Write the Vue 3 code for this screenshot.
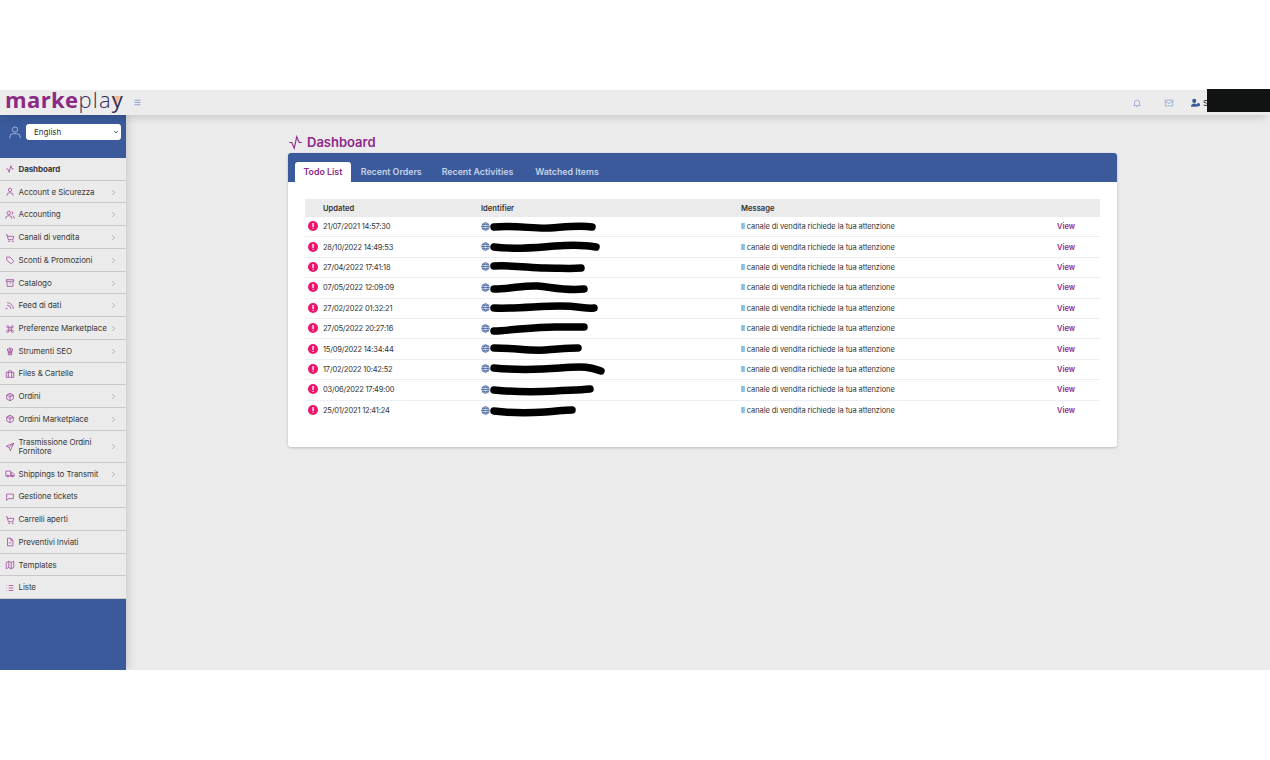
<script setup>
const icons = {
  activity: ['M3 12h4l3 8 4-16 3 8h4'],
  user: ['M12 11a4 4 0 1 0 0-8 4 4 0 0 0 0 8z', 'M5 21v-2a5 5 0 0 1 5-5h4a5 5 0 0 1 5 5v2'],
  users: ['M9 11a4 4 0 1 0 0-8 4 4 0 0 0 0 8z', 'M2 21v-2a5 5 0 0 1 5-5h4a5 5 0 0 1 5 5v2', 'M16 3.2a4 4 0 0 1 0 7.6', 'M22 21v-2a5 5 0 0 0-3.5-4.8'],
  cart: ['M2 4h3l3 12h11l2-8H6', 'M9 20a1 1 0 1 0 0-.01z', 'M18 20a1 1 0 1 0 0-.01z'],
  tag: ['M4 5h8l8 8a2 2 0 0 1 0 3l-4 4a2 2 0 0 1-3 0l-9-8z', 'M8 9h.01'],
  archive: ['M3 4h18v4H3z', 'M5 8v12h14V8', 'M10 12h4'],
  rss: ['M5 4a15 15 0 0 1 15 15', 'M5 10a9 9 0 0 1 9 9', 'M5 18a1 1 0 1 0 0 .01z'],
  command: ['M9 9h6v6H9z', 'M9 9H6.500a2.500 2.500 0 1 1 2.500-2.500z', 'M15 9V6.500A2.500 2.500 0 1 1 17.500 9z', 'M15 15h2.500a2.500 2.500 0 1 1-2.500 2.500z', 'M9 15v2.500A2.500 2.500 0 1 1 6.500 15z'],
  seo: ['M6 7h12v5H6z', 'M8 12v9h8v-9', 'M12 3v18', 'M8 16h8'],
  brief: ['M3 8h18v12H3z', 'M8 20V6a2 2 0 0 1 2-2h4a2 2 0 0 1 2 2v14'],
  box: ['M12 3l8 4.500v9L12 21l-8-4.500v-9z', 'M4 7.500l8 4.500 8-4.500', 'M12 12v9', 'M8 5.200l8 4.600'],
  send: ['M21 3L3 10l7 3 3 8z', 'M21 3L10 13'],
  truck: ['M2 5h12v12H2z', 'M14 9h4l4 4v4h-8z', 'M7 19a2 2 0 1 0 0-4 2 2 0 0 0 0 4z', 'M18 19a2 2 0 1 0 0-4 2 2 0 0 0 0 4z'],
  chat: ['M4 5h16v11H8l-4 4z'],
  file: ['M6 3h8l5 5v13H6z', 'M14 3v5h5', 'M9 14h6'],
  map: ['M3 6l6-3 6 3 6-3v15l-6 3-6-3-6 3z', 'M9 3v15', 'M15 6v15'],
  list: ['M9 6h11', 'M9 12h11', 'M9 18h11', 'M4 6h1', 'M4 12h1', 'M4 18h1'],
}

const menu = [
  { label: 'Dashboard', icon: 'activity', active: true },
  { label: 'Account e Sicurezza', icon: 'user', arrow: true },
  { label: 'Accounting', icon: 'users', arrow: true },
  { label: 'Canali di vendita', icon: 'cart', arrow: true },
  { label: 'Sconti & Promozioni', icon: 'tag', arrow: true },
  { label: 'Catalogo', icon: 'archive', arrow: true },
  { label: 'Feed di dati', icon: 'rss', arrow: true },
  { label: 'Preferenze Marketplace', icon: 'command', arrow: true },
  { label: 'Strumenti SEO', icon: 'seo', arrow: true },
  { label: 'Files & Cartelle', icon: 'brief' },
  { label: 'Ordini', icon: 'box', arrow: true },
  { label: 'Ordini Marketplace', icon: 'box', arrow: true },
  { label: 'Trasmissione Ordini Fornitore', icon: 'send', arrow: true, tall: true },
  { label: 'Shippings to Transmit', icon: 'truck', arrow: true },
  { label: 'Gestione tickets', icon: 'chat' },
  { label: 'Carrelli aperti', icon: 'cart' },
  { label: 'Preventivi Inviati', icon: 'file' },
  { label: 'Templates', icon: 'map' },
  { label: 'Liste', icon: 'list' },
]

const tabs = ['Todo List', 'Recent Orders', 'Recent Activities', 'Watched Items']

const rows = [
  { date: '21/07/2021 14:57:30', w: 106, d: 'M4 5C25 3 45 7 60 6S90 3 102 5' },
  { date: '28/10/2022 14:49:53', w: 110, d: 'M4 5C25 8 50 5 65 4S95 3 106 5' },
  { date: '27/04/2022 17:41:18', w: 95, d: 'M4 4C25 3 40 6 55 6S80 7 91 6' },
  { date: '07/05/2022 12:09:09', w: 98, d: 'M4 6C20 6 35 2 48 3S75 8 94 6' },
  { date: '27/02/2022 01:32:21', w: 108, d: 'M4 5C25 6 50 3 70 3S95 6 104 5' },
  { date: '27/05/2022 20:27:16', w: 98, d: 'M4 7C25 6 45 3 65 3S85 3 94 3' },
  { date: '15/09/2022 14:34:44', w: 92, d: 'M4 4C25 4 40 7 55 6S78 4 88 4' },
  { date: '17/02/2022 10:42:52', w: 115, d: 'M4 4C25 6 45 6 70 4S100 3 111 7' },
  { date: '03/06/2022 17:49:00', w: 104, d: 'M4 5C25 7 45 7 65 6S90 5 100 4' },
  { date: '25/01/2021 12:41:24', w: 86, d: 'M4 5C20 7 40 7 55 6S72 4 82 4' },
]
</script>

<template>
  <div class="page">
    <div class="frame">
      <header class="topbar">
        <div class="logo">
          <span class="logo-bold">marke</span><span class="logo-thin">pla</span><span class="logo-y">y</span>
        </div>
        <svg class="burger" viewBox="0 0 24 24"><path d="M4 6h16M4 12h16M4 18h16" /></svg>
        <div class="top-actions">
          <svg class="top-icon" viewBox="0 0 24 24"><path d="M6 17V11a6 6 0 0 1 12 0v6l2 1H4z" /><path d="M10 21h4" /></svg>
          <svg class="top-icon" viewBox="0 0 24 24"><path d="M3 5h18v14H3z" /><path d="M3 8l9 5 9-5" /></svg>
          <div class="account">
            <svg class="acc-icon" viewBox="0 0 24 24"><circle cx="9" cy="7" r="5" /><path d="M1 21c0-5 3-8 8-8s8 3 8 8z" /><circle cx="19" cy="16" r="4" /></svg>
            <span>Si</span>
          </div>
        </div>
        <div class="redact-box"></div>
      </header>

      <div class="body">
        <aside class="sidebar">
          <div class="side-head">
            <svg class="side-user" viewBox="0 0 24 24"><circle cx="12" cy="7" r="4.500" /><path d="M3 22v-2a6 6 0 0 1 6-6h6a6 6 0 0 1 6 6v2" /></svg>
            <div class="lang-wrap">
              <select class="lang"><option>English</option></select>
              <svg class="lang-chev" viewBox="0 0 24 24"><path d="M5 8l7 8 7-8" /></svg>
            </div>
          </div>
          <nav class="menu">
            <div v-for="m in menu" :key="m.label" class="item" :class="{ active: m.active, tall: m.tall }">
              <svg class="item-icon" viewBox="0 0 24 24"><path v-for="p in icons[m.icon]" :key="p" :d="p" /></svg>
              <span class="item-label">{{ m.label }}</span>
              <svg v-if="m.arrow" class="chev" viewBox="0 0 24 24"><path d="M8 4l8 8-8 8" /></svg>
            </div>
          </nav>
        </aside>

        <main class="main">
          <h1 class="title">
            <svg class="title-icon" viewBox="0 0 24 24"><path d="M2 12h4l4 9 4-18 4 9h4" /></svg>
            Dashboard
          </h1>
          <section class="card">
            <div class="tabs">
              <div v-for="(t, i) in tabs" :key="t" class="tab" :class="{ on: i === 0 }">{{ t }}</div>
            </div>
            <div class="table">
              <div class="row head">
                <div class="c-date">Updated</div>
                <div class="c-id">Identifier</div>
                <div class="c-msg">Message</div>
              </div>
              <div v-for="r in rows" :key="r.date" class="row">
                <div class="c-date">
                  <span class="alert">!</span>{{ r.date }}
                </div>
                <div class="c-id">
                  <svg class="globe" viewBox="0 0 24 24"><circle cx="12" cy="12" r="10" /><path d="M2 12h20M12 2c-6 6-6 14 0 20M12 2c6 6 6 14 0 20M4 7h16M4 17h16" /></svg>
                  <svg class="blob" :width="r.w" height="10" :viewBox="`0 0 ${r.w} 10`"><path :d="r.d" /></svg>
                </div>
                <div class="c-msg">Il canale di vendita richiede la tua attenzione</div>
                <a class="view">View</a>
              </div>
            </div>
          </section>
        </main>
      </div>
    </div>
  </div>
</template>

<style>
html, body { margin: 0; background: #fff; }
</style>

<style scoped>
.page {
  width: 1270px;
  height: 760px;
  padding-top: 90px;
  box-sizing: border-box;
  background: #fff;
  overflow: hidden;
  font-family: Inter, "Open Sans", "Liberation Sans", sans-serif;
  color: #333;
}
.frame {
  height: 580px;
  background: #ebebeb;
  display: flex;
  flex-direction: column;
}
.topbar {
  position: relative;
  height: 25px;
  flex: none;
  display: flex;
  align-items: center;
  background: #ececec;
  box-shadow: 0 6px 8px -4px rgba(0, 0, 0, .16);
  z-index: 2;
}
.logo {
  margin-left: 5px;
  width: 126px;
  font-family: "Open Sans", sans-serif;
  font-size: 22px;
  line-height: 20px;
  margin-top: -7px;
  white-space: nowrap;
}
.logo-bold { font-weight: 700; color: #8b2a85; letter-spacing: .4px; }
.logo-thin { font-weight: 300; color: #33305e; letter-spacing: 1.200px; }
.logo-y { font-weight: 400; color: #33305e; position: relative; z-index: 0; }
.logo-y::before {
  content: "";
  position: absolute;
  left: 0;
  top: 12px;
  border-top: 10px solid #f7b98f;
  border-left: 4.500px solid transparent;
  border-right: 4.500px solid transparent;
  z-index: -1;
}
.burger { width: 9px; height: 9px; margin-left: 2px; fill: none; stroke: #8ea3cc; stroke-width: 3; }
.top-actions {
  margin-left: auto;
  display: flex;
  align-items: center;
  gap: 22px;
  margin-right: 60px;
}
.top-icon { width: 10px; height: 10px; fill: none; stroke: #93a8d3; stroke-width: 2; }
.account {
  display: flex;
  align-items: center;
  gap: 2px;
  font-size: 8px;
  color: #222;
  margin-left: -6px;
}
.acc-icon { width: 11px; height: 10px; fill: #3a5a9b; }
.redact-box {
  position: absolute;
  right: 0;
  top: -1px;
  width: 63px;
  height: 23px;
  background: #111312;
}
.body { flex: 1; display: flex; min-height: 0; }
.sidebar {
  width: 126px;
  flex: none;
  background: #3a5a9b;
  box-shadow: 2px 0 8px rgba(0, 0, 0, .15);
  clip-path: inset(0 -12px 0 0);
  z-index: 1;
}
.side-head {
  height: 43px;
  display: flex;
  align-items: flex-start;
  gap: 4px;
  padding: 9px 5px 0 8px;
  box-sizing: border-box;
}
.side-user { width: 14px; height: 15px; margin-top: 1px; fill: none; stroke: #a9bde3; stroke-width: 1.500; flex: none; }
.lang-wrap { position: relative; width: 95px; height: 16px; }
.lang {
  appearance: none;
  display: block;
  width: 95px;
  height: 16px;
  border: 0;
  border-radius: 3px;
  background: #fff;
  color: #333;
  font: 8px Inter, sans-serif;
  padding: 0 0 0 8px;
}
.lang-chev {
  position: absolute;
  right: 2px;
  top: 5px;
  width: 6px;
  height: 6px;
  fill: none;
  stroke: #444;
  stroke-width: 3.500;
  pointer-events: none;
}
.menu { background: #ebebeb; }
.item {
  height: 22.740px;
  box-sizing: border-box;
  display: flex;
  align-items: center;
  padding: 1px 0 0 5px;
  border-bottom: 1px solid #c9c9c9;
  font-size: 8px;
  color: #3a3a3a;
  position: relative;
}
.item.tall { height: 32px; }
.item.active { font-weight: 700; }
.item-icon { width: 10px; height: 10px; flex: none; fill: none; stroke: #9a3f96; stroke-width: 1.800; margin-right: 3.500px; }
.item-label { width: 90px; line-height: 9px; letter-spacing: -0.1px; white-space: normal; }
.chev { position: absolute; right: 9px; width: 7px; height: 7px; fill: none; stroke: #9a9a9a; stroke-width: 2.500; }
.main {
  flex: 1;
  padding: 0 153px 0 162px;
  box-sizing: border-box;
}
.title {
  height: 38px;
  margin: 0;
  display: flex;
  align-items: center;
  gap: 4px;
  padding-top: 16px;
  box-sizing: border-box;
  font-size: 13px;
  font-weight: 600;
  color: #8e2a8b;
}
.title-icon { width: 15px; height: 15px; fill: none; stroke: #8e2a8b; stroke-width: 1.800; }
.card {
  height: 294px;
  background: #fff;
  border-radius: 3px;
  box-shadow: 0 1px 3px rgba(0, 0, 0, .2);
  overflow: hidden;
}
.tabs {
  height: 29px;
  background: #3a5a9b;
  display: flex;
  align-items: flex-end;
  padding-left: 7px;
  box-sizing: border-box;
}
.tab {
  height: 20px;
  line-height: 20px;
  padding: 0 10px;
  font-size: 8.800px;
  font-weight: 600;
  color: #c6d2e8;
  border-radius: 3px 3px 0 0;
  white-space: nowrap;
}
.tab:last-child { margin-left: 2px; }
.tab.on { background: #fff; color: #8e2a8b; padding: 0 8.500px; }
.table { margin: 17px 17px 0; }
.row {
  height: 20.400px;
  display: flex;
  align-items: center;
  border-bottom: 1px solid #eaeef5;
  box-sizing: border-box;
  font-size: 7.500px;
  color: #333;
}
.row:last-child { border-bottom: 0; }
.row.head {
  height: 18px;
  background: #ebebeb;
  border: 0;
  font-size: 7.600px;
  font-weight: 600;
  color: #333;
}
.c-date { width: 176px; padding-left: 18px; box-sizing: border-box; position: relative; white-space: nowrap; flex: none; letter-spacing: -0.2px; }
.c-id { width: 260px; flex: none; display: flex; align-items: center; }
.c-msg { width: 316px; flex: none; white-space: nowrap; letter-spacing: -0.07px; }
.head .c-date, .head .c-msg { letter-spacing: 0; }
.alert {
  position: absolute;
  left: 3px;
  top: 50%;
  margin-top: -5.500px;
  width: 10px;
  height: 10px;
  border-radius: 50%;
  background: #ee1565;
  color: #fff;
  font-size: 8px;
  font-weight: 700;
  line-height: 10px;
  letter-spacing: 0;
  text-align: center;
}
.globe { width: 9px; height: 9px; fill: none; stroke: #3a5a9b; stroke-width: 2; flex: none; margin-top: -1px; }
.blob { flex: none; fill: none; stroke: #000; stroke-width: 7.500; stroke-linecap: round; overflow: visible; }
.view { color: #8e2a8b; font-weight: 600; font-size: 7.500px; }
</style>
